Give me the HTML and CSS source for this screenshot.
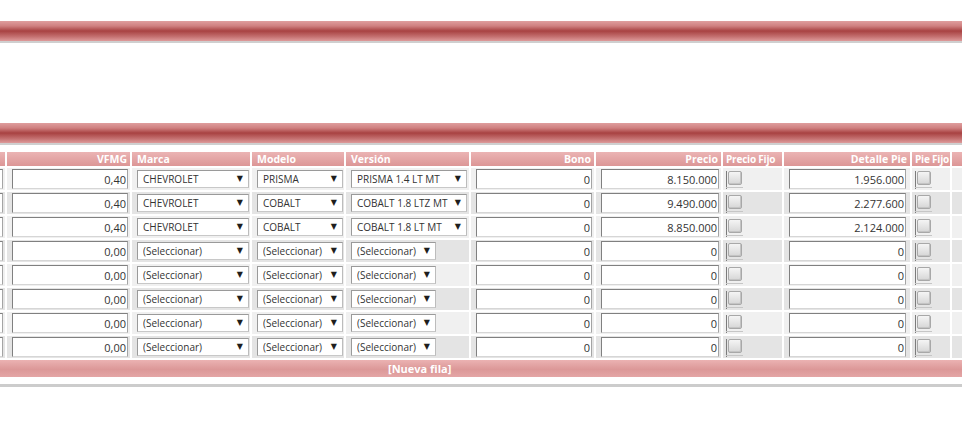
FILE: index.html
```html
<!DOCTYPE html>
<html lang="es">
<head>
<meta charset="utf-8">
<title>Versiones</title>
<link rel="stylesheet" href="styles.css">
</head>
<body>
<div class="bar bar-top"></div>
<div class="bar bar-mid"></div>
<div class="grid-wrap">
<table class="grid">
<colgroup>
<col class="c-lead"><col class="c-vfmg"><col class="c-marca"><col class="c-modelo"><col class="c-version"><col class="c-bono"><col class="c-precio"><col class="c-pfijo"><col class="c-detalle"><col class="c-piefijo"><col class="c-tail">
</colgroup>
<thead>
<tr>
<th></th><th class="r">VFMG</th><th>Marca</th><th>Modelo</th><th>Versión</th><th class="r">Bono</th><th class="r">Precio</th><th class="narrow">Precio Fijo</th><th class="r">Detalle Pie</th><th class="narrow">Pie Fijo</th><th></th>
</tr>
</thead>
<tbody>
<tr>
<td class="lead"><input class="num" value=""></td>
<td><input class="num" value="0,40"></td>
<td><span class="sel"><select class="w-marca"><option>CHEVROLET</option></select></span></td>
<td><span class="sel"><select class="w-modelo"><option>PRISMA</option></select></span></td>
<td><span class="sel"><select class="w-version"><option>PRISMA 1.4 LT MT</option></select></span></td>
<td><input class="num" value="0"></td>
<td><input class="num" value="8.150.000"></td>
<td class="ck"><span class="chk"></span></td>
<td><input class="num w-det" value="1.956.000"></td>
<td class="ck"><span class="chk"></span></td>
<td></td>
</tr>
<tr>
<td class="lead"><input class="num" value=""></td>
<td><input class="num" value="0,40"></td>
<td><span class="sel"><select class="w-marca"><option>CHEVROLET</option></select></span></td>
<td><span class="sel"><select class="w-modelo"><option>COBALT</option></select></span></td>
<td><span class="sel"><select class="w-version"><option>COBALT 1.8 LTZ MT</option></select></span></td>
<td><input class="num" value="0"></td>
<td><input class="num" value="9.490.000"></td>
<td class="ck"><span class="chk"></span></td>
<td><input class="num w-det" value="2.277.600"></td>
<td class="ck"><span class="chk"></span></td>
<td></td>
</tr>
<tr>
<td class="lead"><input class="num" value=""></td>
<td><input class="num" value="0,40"></td>
<td><span class="sel"><select class="w-marca"><option>CHEVROLET</option></select></span></td>
<td><span class="sel"><select class="w-modelo"><option>COBALT</option></select></span></td>
<td><span class="sel"><select class="w-version"><option>COBALT 1.8 LT MT</option></select></span></td>
<td><input class="num" value="0"></td>
<td><input class="num" value="8.850.000"></td>
<td class="ck"><span class="chk"></span></td>
<td><input class="num w-det" value="2.124.000"></td>
<td class="ck"><span class="chk"></span></td>
<td></td>
</tr>
<tr>
<td class="lead"><input class="num" value=""></td>
<td><input class="num" value="0,00"></td>
<td><span class="sel"><select class="w-marca"><option>(Seleccionar)</option></select></span></td>
<td><span class="sel"><select class="w-modelo"><option>(Seleccionar)</option></select></span></td>
<td><span class="sel"><select class="w-version-e"><option>(Seleccionar)</option></select></span></td>
<td><input class="num" value="0"></td>
<td><input class="num" value="0"></td>
<td class="ck"><span class="chk"></span></td>
<td><input class="num w-det" value="0"></td>
<td class="ck"><span class="chk"></span></td>
<td></td>
</tr>
<tr>
<td class="lead"><input class="num" value=""></td>
<td><input class="num" value="0,00"></td>
<td><span class="sel"><select class="w-marca"><option>(Seleccionar)</option></select></span></td>
<td><span class="sel"><select class="w-modelo"><option>(Seleccionar)</option></select></span></td>
<td><span class="sel"><select class="w-version-e"><option>(Seleccionar)</option></select></span></td>
<td><input class="num" value="0"></td>
<td><input class="num" value="0"></td>
<td class="ck"><span class="chk"></span></td>
<td><input class="num w-det" value="0"></td>
<td class="ck"><span class="chk"></span></td>
<td></td>
</tr>
<tr>
<td class="lead"><input class="num" value=""></td>
<td><input class="num" value="0,00"></td>
<td><span class="sel"><select class="w-marca"><option>(Seleccionar)</option></select></span></td>
<td><span class="sel"><select class="w-modelo"><option>(Seleccionar)</option></select></span></td>
<td><span class="sel"><select class="w-version-e"><option>(Seleccionar)</option></select></span></td>
<td><input class="num" value="0"></td>
<td><input class="num" value="0"></td>
<td class="ck"><span class="chk"></span></td>
<td><input class="num w-det" value="0"></td>
<td class="ck"><span class="chk"></span></td>
<td></td>
</tr>
<tr>
<td class="lead"><input class="num" value=""></td>
<td><input class="num" value="0,00"></td>
<td><span class="sel"><select class="w-marca"><option>(Seleccionar)</option></select></span></td>
<td><span class="sel"><select class="w-modelo"><option>(Seleccionar)</option></select></span></td>
<td><span class="sel"><select class="w-version-e"><option>(Seleccionar)</option></select></span></td>
<td><input class="num" value="0"></td>
<td><input class="num" value="0"></td>
<td class="ck"><span class="chk"></span></td>
<td><input class="num w-det" value="0"></td>
<td class="ck"><span class="chk"></span></td>
<td></td>
</tr>
<tr>
<td class="lead"><input class="num" value=""></td>
<td><input class="num" value="0,00"></td>
<td><span class="sel"><select class="w-marca"><option>(Seleccionar)</option></select></span></td>
<td><span class="sel"><select class="w-modelo"><option>(Seleccionar)</option></select></span></td>
<td><span class="sel"><select class="w-version-e"><option>(Seleccionar)</option></select></span></td>
<td><input class="num" value="0"></td>
<td><input class="num" value="0"></td>
<td class="ck"><span class="chk"></span></td>
<td><input class="num w-det" value="0"></td>
<td class="ck"><span class="chk"></span></td>
<td></td>
</tr>
</tbody>
<tfoot>
<tr><td colspan="11" class="newrow"><span class="newrow-label">[Nueva fila]</span></td></tr>
</tfoot>
</table>
</div>
<div class="endline"></div>
</body>
</html>
```

FILE: styles.css
```css
html, body {
  margin: 0;
  padding: 0;
  background: #ffffff;
  font-family: "Open Sans", "Liberation Sans", sans-serif;
  font-size: 11px;
  overflow: hidden;
}

.bar {
  height: 20px;
  background: linear-gradient(#df9e9e 0%, #cf8080 25%, #a84242 50%, #c47070 78%, #de9a9a 100%);
  border-bottom: 2px solid #cfcfcf;
}
.bar-top { margin-top: 21px; }
.bar-mid { margin-top: 80px; }

.grid-wrap {
  margin-top: 5px;
  overflow: hidden;
  width: 962px;
}

.grid {
  table-layout: fixed;
  border-collapse: separate;
  border-spacing: 2px;
  width: 1111px;
  margin-left: -37px;
  font-size: 11px;
}

.c-lead { width: 40px; }
.c-vfmg { width: 123px; }
.c-marca { width: 118px; }
.c-modelo { width: 92px; }
.c-version { width: 123px; }
.c-bono { width: 123px; }
.c-precio { width: 125px; }
.c-pfijo { width: 59px; }
.c-detalle { width: 126px; }
.c-piefijo { width: 38px; }
.c-tail { width: 120px; }

.grid th {
  height: 14px;
  padding: 0 3px 0 5px;
  background: linear-gradient(#ebb4b4, #dc9696);
  color: #ffffff;
  font-size: 10.5px;
  font-weight: 700;
  line-height: 14px;
  text-align: left;
  white-space: nowrap;
  overflow: hidden;
}
.grid th.r { text-align: right; }
.grid th.narrow {
  padding: 0 0 0 3px;
  font-size: 10px;
  letter-spacing: -0.2px;
}

.grid tbody tr { height: 22px; }
.grid tbody tr:nth-child(odd) td { background: #f0f0f0; }
.grid tbody tr:nth-child(even) td { background: #e4e4e4; }

.grid td {
  padding: 0 1px 0 5px;
  vertical-align: middle;
  white-space: nowrap;
  overflow: hidden;
  line-height: 0;
}
.grid td.lead { padding: 0 1px 0 0; }
.grid td.ck { padding-left: 3px; }

.num {
  box-sizing: border-box;
  width: calc(100% - 1px);
  height: 20px;
  margin: 0;
  padding: 0 1px 0 2px;
  border: 1px solid;
  border-color: #808080 #a4a4a4 #d6d6d6 #808080;
  background: #ffffff;
  font-family: "Open Sans", "Liberation Sans", sans-serif;
  font-size: 11px;
  color: #333333;
  text-align: right;
  vertical-align: middle;
}
.num.w-det { width: calc(100% - 3px); }

.sel {
  position: relative;
  display: inline-block;
  vertical-align: middle;
  line-height: 0;
}
.sel::after {
  content: "▼";
  position: absolute;
  right: 6px;
  top: 50%;
  transform: translateY(-50%);
  font-family: "DejaVu Sans", sans-serif;
  font-size: 8px;
  line-height: 8px;
  color: #1e1e1e;
  pointer-events: none;
}
.sel select {
  appearance: none;
  -webkit-appearance: none;
  box-sizing: border-box;
  display: block;
  height: 18px;
  margin: 0;
  padding: 0 12px 0 5px;
  border: 1px solid;
  border-color: #9a9a9a #bcbcbc #c8c8c8 #9a9a9a;
  border-radius: 0;
  background: #ffffff;
  font-family: "Open Sans", "Liberation Sans", sans-serif;
  font-size: 10px;
  color: #333333;
}
.w-marca { width: 112px; }
.w-modelo { width: 86px; }
.w-version { width: 116px; }
.w-version-e { width: 85px; }

.chk {
  position: relative;
  display: inline-block;
  vertical-align: middle;
  box-sizing: border-box;
  width: 14px;
  height: 14px;
  margin-left: 2px;
  margin-top: -2px;
  border: 1px solid #a8a8a8;
  border-radius: 2px;
  background: linear-gradient(#f5f5f5, #d6d6d6);
  box-shadow: inset -1px -1px 0 #c4c4c4;
}
.chk::before {
  content: "";
  position: absolute;
  left: -3px;
  top: -1px;
  width: 1px;
  height: 18px;
  background: #7c7c7c;
}
.chk::after {
  content: "";
  position: absolute;
  left: -3px;
  bottom: -4px;
  width: 17px;
  height: 1px;
  background: #c6c6c6;
}

.grid tfoot td.newrow {
  height: 17px;
  padding: 0 0 0 423px;
  background: linear-gradient(#ebb2b2 0%, #dc9898 55%, #e4a6a6 100%);
  line-height: 17px;
  text-align: left;
}
.newrow-label {
  color: #ffffff;
  font-size: 11px;
  font-weight: 700;
}

.endline {
  margin-top: 5px;
  height: 3px;
  background: #cccccc;
}
```
